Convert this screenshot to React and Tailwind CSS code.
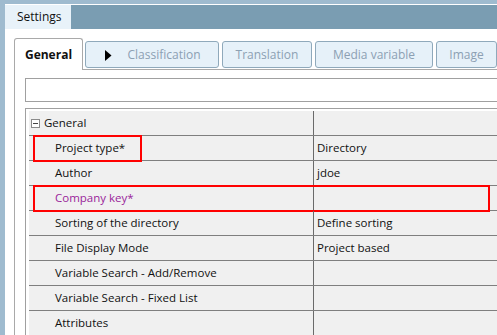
const rows = [
  { label: 'Project type*', value: 'Directory', box: 'w-[109px]' },
  { label: 'Author', value: 'jdoe' },
  { label: 'Company key*', value: '', purple: true, box: 'w-[457px]' },
  { label: 'Sorting of the directory', value: 'Define sorting' },
  { label: 'File Display Mode', value: 'Project based' },
  { label: 'Variable Search - Add/Remove', value: '' },
  { label: 'Variable Search - Fixed List', value: '' },
  { label: 'Attributes', value: '' },
];

const tabs = [
  { name: 'Classification', w: 'w-[134px]', arrow: true },
  { name: 'Translation', w: 'w-[90px]' },
  { name: 'Media variable', w: 'w-[118px]' },
  { name: 'Image', w: 'w-[61px]' },
];

export default function App() {
  return (
    <div
      className="w-[497px] h-[335px] overflow-hidden bg-[#9fbbcf] pl-[5px] pt-[4px] flex flex-col text-[11.5px] text-[#111]"
      style={{ fontFamily: "'Open Sans', 'Noto Sans', sans-serif" }}
    >
      {/* ── Window title strip ───────────────────────────── */}
      <div className="flex h-[25px] border-t border-white bg-[#7a9db2] shrink-0">
        <div className="w-[66px] bg-[#e8f2f9] flex items-center pl-[12px] text-[12px]">Settings</div>
      </div>

      {/* ── Body ─────────────────────────────────────────── */}
      <div className="flex-1 bg-white pt-[9px] pl-[9px] flex flex-col min-h-0">
        {/* tabs */}
        <div className="flex items-start h-[31px] shrink-0 text-[12px]">
          <div className="w-[70px] h-[32px] border border-b-0 border-[#a9a9a9] rounded-t-[3px] bg-white flex items-center justify-center font-bold text-[#111] relative z-10">
            General
          </div>
          <div className="flex gap-[3px] ml-[2px] mt-[3px]">
            {tabs.map((t) => (
              <div
                key={t.name}
                className={`${t.w} h-[27px] border border-[#8fa9bb] rounded-[3px] bg-[#e6f1f9] flex items-center justify-center text-[#8ca0b3] relative`}
              >
                {t.arrow && (
                  <svg className="absolute left-[19px] top-[8px]" width="7" height="11" viewBox="0 0 7 11">
                    <path d="M0 0 L6.5 5.5 L0 11 Z" fill="#000" />
                  </svg>
                )}
                <span className={t.arrow ? 'ml-[24px]' : ''}>{t.name}</span>
              </div>
            ))}
          </div>
        </div>

        {/* tab panel */}
        <div className="flex-1 border-l border-t border-[#a9a9a9] pl-[10px] pt-[8px] flex flex-col min-h-0">
          <div className="h-[24px] border border-r-0 border-[#a0a0a0] bg-white shrink-0" />

          {/* property grid */}
          <div className="mt-[6px] flex-1 border-l border-t border-[#a0a0a0] pl-[3px] pt-[2px] bg-white">
            <div className="bg-[#f0f0f0] flex flex-col">
              <div className="flex h-[25px] border-b border-[#7f7f7f]">
                <div className="w-[284px] flex items-center">
                  <span className="ml-[2px] w-[9px] h-[9px] border border-[#8a8a8a] bg-white flex items-center justify-center">
                    <span className="w-[5px] h-px bg-[#444]" />
                  </span>
                  <span className="ml-[4px]">General</span>
                </div>
                <div className="w-px bg-[#6a6a6a]" />
                <div className="flex-1" />
              </div>
              {rows.map((r) => (
                <div key={r.label} className="relative flex h-[25px] border-b border-[#7f7f7f]">
                  <div className={`w-[284px] flex items-center pl-[26px] ${r.purple ? 'text-[#9a1f9a]' : ''}`}>
                    {r.label}
                  </div>
                  <div className="w-px bg-[#6a6a6a]" />
                  <div className="flex-1 flex items-center pl-[3px]">{r.value}</div>
                  {r.box && (
                    <div className={`absolute left-[4px] top-[-1px] h-[27px] border-2 border-[#ff0000] ${r.box}`} />
                  )}
                </div>
              ))}
            </div>
          </div>
        </div>
      </div>
    </div>
  );
}
